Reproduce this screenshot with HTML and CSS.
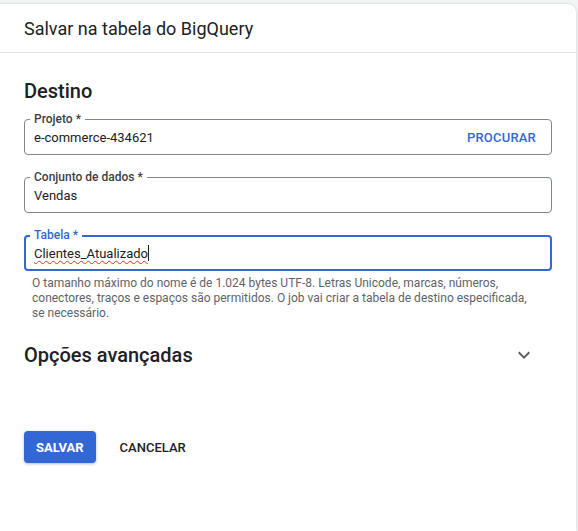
FILE: index.html
```html
<!DOCTYPE html>
<html lang="pt">
<head>
<meta charset="utf-8">
<link rel="stylesheet" href="styles.css">
</head>
<body>
<div class="panel">
  <div class="header">Salvar na tabela do BigQuery</div>
  <div class="content">
    <h2 class="section-title">Destino</h2>
    <div class="field">
      <span class="field-label">Projeto *</span>
      <span class="field-value">e-commerce-434621</span>
      <span class="field-action">PROCURAR</span>
    </div>
    <div class="field">
      <span class="field-label">Conjunto de dados *</span>
      <span class="field-value">Vendas</span>
    </div>
    <div class="field field-focused">
      <span class="field-label">Tabela *</span>
      <span class="field-value"><span class="misspelled">Clientes_Atualizado</span><span class="caret"></span></span>
    </div>
    <p class="helper">O tamanho máximo do nome é de 1.024 bytes UTF-8. Letras Unicode, marcas, números, conectores, traços e espaços são permitidos. O job vai criar a tabela de destino especificada, se necessário.</p>
    <div class="advanced">
      <span class="advanced-title">Opções avançadas</span>
      <svg class="chevron" width="24" height="24" viewBox="0 0 24 24"><path d="M7.41 8.59L12 13.17l4.59-4.58L18 10l-6 6-6-6 1.41-1.41z" fill="#5f6368"/></svg>
    </div>
    <div class="actions">
      <button class="btn btn-primary">SALVAR</button>
      <button class="btn btn-text">CANCELAR</button>
    </div>
  </div>
</div>
</body>
</html>
```

FILE: styles.css
```css
html, body {
  margin: 0;
  height: 100%;
}
body {
  background: #f1f3f4;
  padding-top: 4px;
  box-sizing: border-box;
  font-family: Roboto, "Liberation Sans", sans-serif;
  color: #202124;
}
.panel {
  width: 576px;
  height: 527px;
  background: #fff;
  border-radius: 0 8px 0 0;
  box-shadow: 0 0 2px rgba(60, 64, 67, 0.25);
}
.header {
  height: 48px;
  padding: 0 24px;
  display: flex;
  align-items: center;
  font-size: 18px;
  border-bottom: 1px solid #e0e0e0;
}
.content {
  padding: 0 24px;
}
.section-title {
  margin: 26px 0 16px;
  font-size: 20px;
  line-height: 24px;
  font-weight: 500;
}
.field {
  position: relative;
  height: 36px;
  box-sizing: border-box;
  border: 1px solid #80868b;
  border-radius: 4px;
  display: flex;
  align-items: center;
  padding: 0 15px 0 9px;
  margin-bottom: 22px;
  font-size: 13px;
}
.field-label {
  position: absolute;
  top: -8px;
  left: 5px;
  padding: 0 4px;
  background: #fff;
  font-size: 12px;
  line-height: 14px;
  font-weight: 500;
  color: #3c4043;
}
.field-value {
  flex: 1;
  color: #202124;
  display: flex;
  align-items: center;
}
.field-action {
  color: #3367d6;
  font-size: 13px;
  font-weight: 500;
  letter-spacing: 0.2px;
}
.field-focused {
  border: 2px solid #3367d6;
  padding-left: 8px;
  margin-bottom: 0;
}
.field-focused .field-label {
  color: #3367d6;
  left: 4px;
  top: -9px;
}
.misspelled {
  text-decoration: underline wavy #d93025;
  text-decoration-thickness: 1px;
  text-underline-offset: 2px;
}
.caret {
  display: inline-block;
  width: 1px;
  height: 16px;
  background: #202124;
}
.helper {
  margin: 5px 0 0;
  padding: 0 20px 0 8px;
  font-size: 12px;
  line-height: 15px;
  color: #5f6368;
}
.advanced {
  margin-top: 22px;
  display: flex;
  align-items: center;
  justify-content: space-between;
  padding-right: 16px;
}
.advanced-title {
  font-size: 20px;
  line-height: 24px;
  font-weight: 500;
}
.chevron {
  display: block;
}
.actions {
  margin-top: 64px;
  display: flex;
  gap: 12px;
}
.btn {
  height: 32px;
  padding: 0 12px;
  border: none;
  border-radius: 4px;
  font-family: Roboto, "Liberation Sans", sans-serif;
  font-size: 13px;
  font-weight: 500;
  background: transparent;
  color: #202124;
}
.btn-primary {
  background: #3367d6;
  color: #fff;
  font-weight: 700;
  box-shadow: 0 1px 3px rgba(60, 64, 67, 0.35);
}
```
